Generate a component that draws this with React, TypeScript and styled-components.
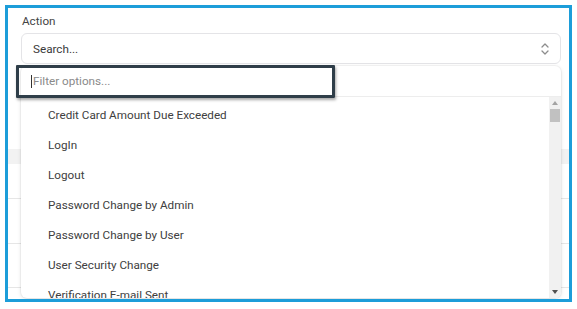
import React from "react";
import styled, { createGlobalStyle } from "styled-components";

const Global = createGlobalStyle`
  html, body { margin: 0; padding: 0; background: #ffffff; }
  body { font-family: Roboto, "Liberation Sans", Arial, sans-serif; }
  * { box-sizing: border-box; }
`;

const Page = styled.div`
  width: 577px;
  height: 309px;
  padding: 5px 5px 7px 5px;
  background: #ffffff;
`;

const Frame = styled.div`
  width: 567px;
  height: 297px;
  border: 3px solid #1c9dd9;
  background: #ffffff;
  display: flex;
  flex-direction: column;
  overflow: hidden;
`;

const Field = styled.div`
  display: flex;
  flex-direction: column;
  gap: 5px;
  padding: 6px 8px 0 13px;
  position: relative;
`;

const Label = styled.label`
  font-size: 11.7px;
  line-height: 14px;
  color: #444;
  padding-left: 1px;
`;

const Select = styled.div`
  height: 31px;
  border: 1px solid #e4e4e7;
  border-radius: 6px;
  display: flex;
  align-items: center;
  justify-content: space-between;
  padding: 0 10px 0 11px;
  font-size: 11.7px;
  color: #3a3a3a;
  background: #fff;
`;

const Panel = styled.div`
  position: absolute;
  left: 13px;
  right: 8px;
  top: 58px;
  height: 232px;
  background: #fff;
  border-radius: 6px;
  box-shadow: 0 1px 4px rgba(0, 0, 0, 0.12), 0 0 0 1px rgba(0, 0, 0, 0.03);
  display: flex;
  flex-direction: column;
  z-index: 2;
`;

const FilterRow = styled.div`
  height: 31px;
  border-bottom: 1px solid #ededed;
  display: flex;
  align-items: center;
  padding-left: 10px;
`;

const Caret = styled.span`
  width: 1px;
  height: 13px;
  background: #333;
  margin-right: 1px;
`;

const FilterInput = styled.input`
  border: none;
  outline: none;
  font-family: inherit;
  font-size: 11.7px;
  color: #333;
  padding: 0;
  background: transparent;
  width: 280px;
  &::placeholder { color: #8a8a8a; }
`;

const ListArea = styled.div`
  flex: 1;
  display: flex;
  overflow: hidden;
  border-radius: 0 0 6px 6px;
`;

const List = styled.ul`
  flex: 1;
  list-style: none;
  margin: 0;
  padding: 3px 0 0 0;
  overflow: hidden;
`;

const Item = styled.li`
  height: 30px;
  display: flex;
  align-items: center;
  padding-left: 27px;
  font-size: 11.7px;
  color: #404040;
  white-space: nowrap;
`;

const ScrollTrack = styled.div`
  width: 12px;
  background: #f1f1f1;
  display: flex;
  flex-direction: column;
  align-items: center;
  padding: 4px 0 4px 0;
`;

const Arrow = styled.div<{ $down?: boolean; $dark?: boolean }>`
  width: 0;
  height: 0;
  border-left: 3px solid transparent;
  border-right: 3px solid transparent;
  ${(p) =>
    p.$down
      ? `border-top: 4px solid ${p.$dark ? "#505050" : "#a3a3a3"};`
      : `border-bottom: 4px solid ${p.$dark ? "#505050" : "#a3a3a3"};`}
`;

const Thumb = styled.div`
  width: 10px;
  height: 13px;
  background: #c1c1c1;
  margin-top: 4px;
`;

const Spacer = styled.div`
  flex: 1;
`;

const Highlight = styled.div`
  position: absolute;
  left: 8px;
  top: 57px;
  width: 319px;
  height: 33px;
  border: 3px solid #2f3e49;
  border-radius: 1px;
  box-shadow: 1px 2px 3px rgba(0, 0, 0, 0.35);
  pointer-events: none;
  z-index: 3;
`;

const Table = styled.div`
  margin-top: 85px;
  display: flex;
  flex-direction: column;
`;

const HeaderBand = styled.div`
  height: 15px;
  background: #f2f2f2;
`;

const Row = styled.div<{ $h: number }>`
  height: ${(p) => p.$h}px;
  border-bottom: 1px solid #e6e6e6;
`;

const items = [
  "Credit Card Amount Due Exceeded",
  "LogIn",
  "Logout",
  "Password Change by Admin",
  "Password Change by User",
  "User Security Change",
  "Verification E-mail Sent",
];

const ChevronsUpDown = () => (
  <svg width="10" height="14" viewBox="0 0 10 14" fill="none" stroke="#8d8d8d" strokeWidth="1.3" strokeLinecap="round" strokeLinejoin="round">
    <path d="M2 5 L5 2 L8 5" />
    <path d="M2 9 L5 12 L8 9" />
  </svg>
);

export default function App() {
  return (
    <Page>
      <Global />
      <Frame>
        <Field>
          <Label>Action</Label>
          <Select>
            <span>Search...</span>
            <ChevronsUpDown />
          </Select>
          <Panel>
            <FilterRow>
              <Caret />
              <FilterInput placeholder="Filter options..." readOnly />
            </FilterRow>
            <ListArea>
              <List>
                {items.map((t) => (
                  <Item key={t}>{t}</Item>
                ))}
              </List>
              <ScrollTrack>
                <Arrow />
                <Thumb />
                <Spacer />
                <Arrow $down $dark />
              </ScrollTrack>
            </ListArea>
          </Panel>
          <Highlight />
        </Field>
        <Table>
          <HeaderBand />
          <Row $h={35} />
          <Row $h={45} />
          <Row $h={44} />
          <Row $h={20} />
        </Table>
      </Frame>
    </Page>
  );
}
